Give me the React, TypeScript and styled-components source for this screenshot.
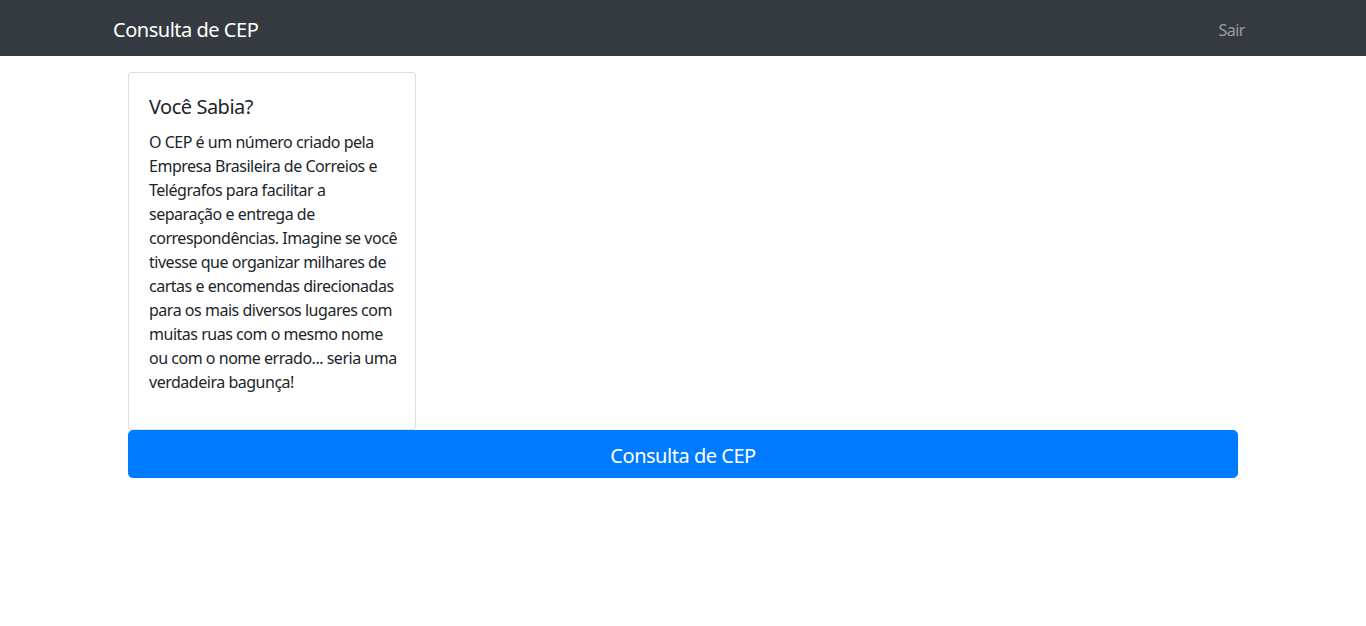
import React from "react";
import styled, { createGlobalStyle } from "styled-components";

const GlobalStyle = createGlobalStyle`
  html, body { margin: 0; padding: 0; }
  body {
    font-family: "Noto Sans", "Open Sans", sans-serif;
    font-size: 16px;
    line-height: 1.5;
    letter-spacing: -0.03em;
    color: #212529;
    background: #fff;
  }
  * { box-sizing: border-box; }
`;

const Navbar = styled.nav`
  background: #343a40;
  padding: 8px 16px;
`;

const NavContainer = styled.div`
  max-width: 1140px;
  margin: 0 auto;
  display: flex;
  align-items: center;
  justify-content: space-between;
`;

const Brand = styled.a`
  color: #fff;
  font-size: 20px;
  line-height: 30px;
  padding: 7px 0 3px;
  text-decoration: none;
`;

const NavLink = styled.a`
  color: rgba(255, 255, 255, 0.5);
  font-size: 16px;
  line-height: 24px;
  padding: 10px 8px 6px;
  text-decoration: none;
`;

const Container = styled.main`
  max-width: 1140px;
  margin: 0 auto;
  padding: 0 15px;
`;

const Card = styled.div`
  margin-top: 16px;
  width: 288px;
  border: 1px solid rgba(0, 0, 0, 0.125);
  border-radius: 4px;
  background: #fff;
`;

const CardBody = styled.div`
  padding: 20px;
`;

const CardTitle = styled.h5`
  margin: 0 0 12px;
  padding-top: 2px;
  height: 24px;
  font-size: 20px;
  font-weight: 400;
  line-height: 1.2;
`;

const CardText = styled.p`
  margin: 0 0 16px;
  padding-top: 1px;
  height: 264px;
  overflow: visible;
`;

const Line = styled.span`
  display: block;
  white-space: nowrap;
`;

const Button = styled.button`
  display: block;
  width: 100%;
  background: #007bff;
  color: #fff;
  border: 1px solid #007bff;
  border-radius: 4.8px;
  padding: 10px 16px 6px;
  font-family: inherit;
  letter-spacing: inherit;
  font-size: 20px;
  line-height: 30px;
  cursor: pointer;
`;

const lines = [
  "O CEP é um número criado pela",
  "Empresa Brasileira de Correios e",
  "Telégrafos para facilitar a",
  "separação e entrega de",
  "correspondências. Imagine se você",
  "tivesse que organizar milhares de",
  "cartas e encomendas direcionadas",
  "para os mais diversos lugares com",
  "muitas ruas com o mesmo nome",
  "ou com o nome errado... seria uma",
  "verdadeira bagunça!",
];

export default function App() {
  return (
    <>
      <GlobalStyle />
      <Navbar>
        <NavContainer>
          <Brand href="#">Consulta de CEP</Brand>
          <NavLink href="#">Sair</NavLink>
        </NavContainer>
      </Navbar>
      <Container>
        <Card>
          <CardBody>
            <CardTitle>Você Sabia?</CardTitle>
            <CardText>
              {lines.map((l, i) => (
                <Line key={i}>{l} </Line>
              ))}
            </CardText>
          </CardBody>
        </Card>
        <Button>Consulta de CEP</Button>
      </Container>
    </>
  );
}
